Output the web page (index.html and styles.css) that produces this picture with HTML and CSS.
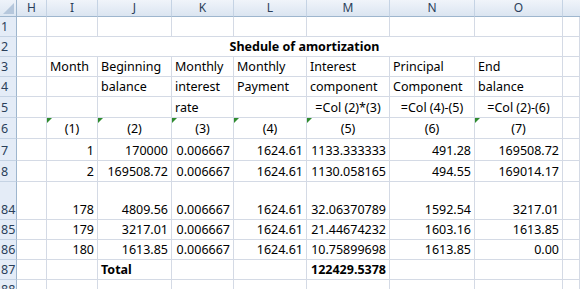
FILE: index.html
```html
<!DOCTYPE html>
<html>
<head>
<meta charset="utf-8">
<link rel="stylesheet" href="styles.css">
</head>
<body>
<div class="sheet">
  <div class="corner"><svg width="16" height="16" viewBox="0 0 16 16"><polygon points="3,14 14,14 14,3" fill="#b5c7dc"/></svg></div>
  <div class="ch">H</div><div class="ch">I</div><div class="ch">J</div><div class="ch">K</div><div class="ch">L</div><div class="ch">M</div><div class="ch">N</div><div class="ch">O</div><div class="ch last"></div>

  <div class="rh">1</div>
  <div class="c"></div><div class="c"></div><div class="c"></div><div class="c"></div><div class="c"></div><div class="c"></div><div class="c"></div><div class="c"></div><div class="c"></div>

  <div class="rh">2</div>
  <div class="c"></div><div class="c title b">Shedule of amortization</div><div class="c"></div>

  <div class="rh">3</div>
  <div class="c"></div><div class="c">Month</div><div class="c">Beginning</div><div class="c">Monthly</div><div class="c">Monthly</div><div class="c">Interest</div><div class="c">Principal</div><div class="c">End</div><div class="c"></div>

  <div class="rh">4</div>
  <div class="c"></div><div class="c"></div><div class="c">balance</div><div class="c">interest</div><div class="c">Payment</div><div class="c">component</div><div class="c">Component</div><div class="c">balance</div><div class="c"></div>

  <div class="rh">5</div>
  <div class="c"></div><div class="c"></div><div class="c"></div><div class="c">rate</div><div class="c"></div><div class="c m">=Col (2)*(3)</div><div class="c m">=Col (4)-(5)</div><div class="c m">=Col (2)-(6)</div><div class="c"></div>

  <div class="rh">6</div>
  <div class="c"></div><div class="c m g">(1)</div><div class="c m g">(2)</div><div class="c m g">(3)</div><div class="c m g">(4)</div><div class="c m g">(5)</div><div class="c m">(6)</div><div class="c m g">(7)</div><div class="c"></div>

  <div class="rh">7</div>
  <div class="c"></div><div class="c r">1</div><div class="c r">170000</div><div class="c r">0.006667</div><div class="c r">1624.61</div><div class="c r">1133.333333</div><div class="c r">491.28</div><div class="c r">169508.72</div><div class="c"></div>

  <div class="rh">8</div>
  <div class="c"></div><div class="c r">2</div><div class="c r">169508.72</div><div class="c r">0.006667</div><div class="c r">1624.61</div><div class="c r">1130.058165</div><div class="c r">494.55</div><div class="c r">169014.17</div><div class="c"></div>

  <div class="rh">84</div>
  <div class="c"></div><div class="c r">178</div><div class="c r">4809.56</div><div class="c r">0.006667</div><div class="c r">1624.61</div><div class="c r">32.06370789</div><div class="c r">1592.54</div><div class="c r">3217.01</div><div class="c"></div>

  <div class="rh">85</div>
  <div class="c"></div><div class="c r">179</div><div class="c r">3217.01</div><div class="c r">0.006667</div><div class="c r">1624.61</div><div class="c r">21.44674232</div><div class="c r">1603.16</div><div class="c r">1613.85</div><div class="c"></div>

  <div class="rh">86</div>
  <div class="c"></div><div class="c r">180</div><div class="c r">1613.85</div><div class="c r">0.006667</div><div class="c r">1624.61</div><div class="c r">10.75899698</div><div class="c r">1613.85</div><div class="c r">0.00</div><div class="c"></div>

  <div class="rh">87</div>
  <div class="c"></div><div class="c"></div><div class="c b">Total</div><div class="c"></div><div class="c"></div><div class="c r b over">122429.5378</div><div class="c"></div><div class="c"></div><div class="c"></div>

  <div class="rh">88</div>
  <div class="c"></div><div class="c"></div><div class="c"></div><div class="c"></div><div class="c"></div><div class="c"></div><div class="c"></div><div class="c"></div><div class="c"></div>
</div>
</body>
</html>
```

FILE: styles.css
```css
html, body {
  margin: 0;
  padding: 0;
  background: #ffffff;
  overflow: hidden;
}

.sheet {
  display: grid;
  grid-template-columns: 17px 30px 51px 74px 62px 73px 83px 85px 88px 1fr;
  grid-template-rows: 17px 20px 20px 20px 20px 21px 21px 22px 21px 38px 20px 20px 20px 20px;
  width: 580px;
  font-family: "Noto Sans", "Open Sans", sans-serif;
  font-size: 12.5px;
  color: #000;
}

.corner {
  box-sizing: border-box;
  background: linear-gradient(#eef3fa, #dce6f2);
  border-right: 1px solid #9eb6ce;
  border-bottom: 1px solid #9eb6ce;
  display: flex;
  align-items: flex-end;
  justify-content: flex-end;
}

.corner svg {
  display: block;
}

.ch {
  box-sizing: border-box;
  background: linear-gradient(#f0f4fa, #dbe5f1);
  border-right: 1px solid #c5d3e4;
  border-bottom: 1px solid #9eb6ce;
  color: #2a3f5a;
  display: flex;
  align-items: center;
  justify-content: center;
  font-size: 12px;
  line-height: 14px;
}

.ch.last {
  border-right: none;
}

.rh {
  box-sizing: border-box;
  background: #e4ecf7;
  border-right: 1px solid #9eb6ce;
  border-bottom: 1px solid #c5d3e4;
  color: #2a3f5a;
  display: flex;
  align-items: flex-end;
  padding: 0 0 2px 1px;
  font-size: 12.5px;
  line-height: 14px;
}

.c {
  box-sizing: border-box;
  border-right: 1px solid #d4dae5;
  border-bottom: 1px solid #d4dae5;
  display: flex;
  align-items: flex-end;
  justify-content: flex-start;
  padding: 0 3px 2px 3px;
  line-height: 14px;
  white-space: nowrap;
  position: relative;
}

.c.r {
  justify-content: flex-end;
}

.c.m {
  justify-content: center;
}

.c.b {
  font-weight: bold;
}

.c.over {
  overflow: visible;
}

.title {
  grid-column: span 7;
  justify-content: center;
}

.g::before {
  content: "";
  position: absolute;
  left: 0;
  top: 0;
  border-top: 5px solid #2e8b2e;
  border-right: 5px solid transparent;
}
```
